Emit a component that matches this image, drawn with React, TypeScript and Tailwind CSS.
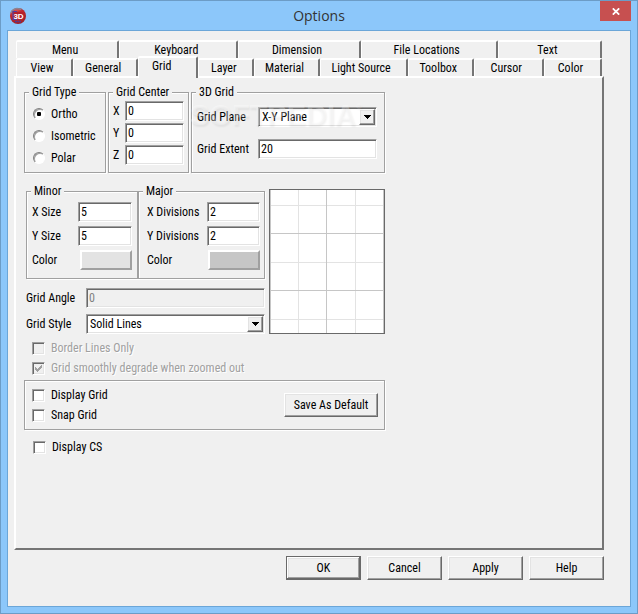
import { FC, ReactNode, useId, useState } from "react";

const SUNKEN =
  "border border-t-[#a0a0a0] border-l-[#a0a0a0] border-r-white border-b-white shadow-[inset_1px_1px_#696969,inset_-1px_-1px_#e3e3e3]";
const RAISED =
  "border border-t-white border-l-white border-r-[#696969] border-b-[#696969] shadow-[inset_-1px_-1px_#a0a0a0,inset_1px_1px_#e3e3e3]";
const SWATCH = "h-5 border-2 border-t-white border-l-white border-r-[#a0a0a0] border-b-[#a0a0a0]";

const topTabs = ["Menu", "Keyboard", "Dimension", "File Locations", "Text"];
const bottomTabs = ["View", "General", "Grid", "Layer", "Material", "Light Source", "Toolbox", "Cursor", "Color"];

interface TabProps {
  label: string;
  active: boolean;
  onSelect: (label: string) => void;
}

const Tab: FC<TabProps> = ({ label, active, onSelect }) => (
  <button
    type="button"
    role="tab"
    aria-selected={active}
    onClick={() => onSelect(label)}
    className={`rounded-t-xs border-t-2 border-l border-r-2 border-t-white border-l-white border-r-[#757575] bg-[#f0f0f0] pr-1 whitespace-nowrap ${
      active ? "z-10 -mt-0.5 -mb-0.5 pr-3 pb-1" : ""
    }`}
  >
    {label}
  </button>
);

interface GroupProps {
  title: string;
  className?: string;
  bodyClass?: string;
  children: ReactNode;
}

const Group: FC<GroupProps> = ({ title, className = "", bodyClass = "", children }) => (
  <fieldset className={`border border-[#a0a0a0] shadow-[1px_1px_#fff,inset_1px_1px_#fff] ${className}`}>
    <legend className="ml-1 bg-[#f0f0f0] px-[3px] leading-[14px] whitespace-nowrap">{title}</legend>
    <div className={bodyClass}>{children}</div>
  </fieldset>
);

interface FieldProps {
  label: string;
  value: string;
  labelClass?: string;
  disabled?: boolean;
}

const Field: FC<FieldProps> = ({ label, value, labelClass = "", disabled }) => {
  const id = useId();
  return (
    <div className="flex items-center">
      <label htmlFor={id} className={`shrink-0 ${labelClass}`}>
        {label}
      </label>
      <input
        id={id}
        type="text"
        defaultValue={value}
        disabled={disabled}
        className={`h-5 w-full min-w-0 rounded-none px-0.5 outline-none ${SUNKEN} ${
          disabled ? "bg-[#f0f0f0] text-[#808080]" : "bg-white"
        }`}
      />
    </div>
  );
};

interface SelectFieldProps {
  label: string;
  options: string[];
  labelClass?: string;
}

const SelectField: FC<SelectFieldProps> = ({ label, options, labelClass = "" }) => {
  const id = useId();
  return (
    <div className="flex items-center">
      <label htmlFor={id} className={`shrink-0 ${labelClass}`}>
        {label}
      </label>
      <div className="relative w-full">
        <select id={id} className={`block h-5 w-full appearance-none rounded-none bg-white pr-5 pl-[3px] leading-4 outline-none ${SUNKEN}`}>
          {options.map((o) => (
            <option key={o}>{o}</option>
          ))}
        </select>
        <span className={`pointer-events-none absolute top-0.5 right-0.5 bottom-0.5 flex w-4 items-center justify-center bg-[#f0f0f0] ${RAISED}`}>
          <svg width="7" height="4" viewBox="0 0 7 4" shapeRendering="crispEdges">
            <path d="M0 0h7v1H0zM1 1h5v1H1zM2 2h3v1H2zM3 3h1v1H3z" fill="#000" />
          </svg>
        </span>
      </div>
    </div>
  );
};

interface CheckProps {
  label: string;
  checked?: boolean;
  disabled?: boolean;
}

const Check: FC<CheckProps> = ({ label, checked, disabled }) => (
  <label className={`flex h-5 items-center gap-1.5 ${disabled ? "text-[#a0a0a0] [text-shadow:1px_1px_#fff]" : ""}`}>
    <span className="grid place-items-center">
      <input
        type="checkbox"
        defaultChecked={checked}
        disabled={disabled}
        className={`peer col-start-1 row-start-1 size-[13px] appearance-none ${SUNKEN} ${disabled ? "bg-[#f0f0f0]" : "bg-white"}`}
      />
      <svg
        className="pointer-events-none invisible col-start-1 row-start-1 peer-checked:visible"
        width="7"
        height="7"
        viewBox="0 0 7 7"
        shapeRendering="crispEdges"
      >
        <path
          d="M0 2h1v3H0zM1 3h1v3H1zM2 4h1v3H2zM3 3h1v3H3zM4 2h1v3H4zM5 1h1v3H5zM6 0h1v3H6z"
          fill={disabled ? "#a0a0a0" : "#000"}
        />
      </svg>
    </span>
    {label}
  </label>
);

const Radio: FC<{ label: string; checked?: boolean }> = ({ label, checked }) => (
  <label className="flex h-[22px] items-center gap-1.5">
    <input
      type="radio"
      name="gridType"
      defaultChecked={checked}
      className="size-3 appearance-none rounded-full border border-t-[#808080] border-r-white border-b-white border-l-[#808080] bg-white shadow-[inset_1px_1px_#a0a0a0] checked:bg-[radial-gradient(circle,#000_2px,#fff_2.5px)]"
    />
    {label}
  </label>
);

const Logo = () => (
  <svg width="18" height="18" viewBox="0 0 18 18" aria-hidden="true">
    <defs>
      <radialGradient id="ball" cx="40%" cy="30%" r="75%">
        <stop offset="0" stopColor="#dd6a66" />
        <stop offset="0.5" stopColor="#c3272b" />
        <stop offset="1" stopColor="#96202a" />
      </radialGradient>
    </defs>
    <circle cx="9" cy="9" r="8" fill="url(#ball)" />
    <path d="M1.800 6Q3.500 2 8 1.500L12.500 2.400" fill="none" stroke="#8d8390" strokeWidth="1.600" />
    <path d="M4 4.500h9l1.500 1.500v6H4z" fill="#b3202c" />
    <path d="M8 4.500H4v8h4" fill="none" stroke="#4f3fa0" strokeWidth="1.200" />
    <text x="9.500" y="11.500" textAnchor="middle" fontSize="8" fontWeight="700" fill="#fff" fontFamily="Liberation Sans, sans-serif">
      3D
    </text>
    <path d="M6 14.500h6" stroke="#4b3b98" strokeWidth="1.500" strokeDasharray="2 0.500" />
  </svg>
);

const GridPreview = () => (
  <svg width="116" height="145" viewBox="0 0 116 145" shapeRendering="crispEdges" className="shrink-0">
    <rect width="116" height="145" fill="#696969" />
    <rect x="1" y="1" width="114" height="143" fill="#fff" />
    <path d="M29.500 1v143M86.500 1v143M1 16.500h114M1 73.500h114M1 130.500h114" stroke="#e3e3e3" />
    <path d="M1.500 1v143M57.500 1v143M114.500 1v143M1 44.500h114M1 101.500h114" stroke="#c6c6c6" />
  </svg>
);

const DialogButton: FC<{ label: string; primary?: boolean }> = ({ label, primary }) => (
  <button
    type="button"
    className={`h-6 w-[75px] bg-[#f0f0f0] ${
      primary
        ? "border border-[#696969] shadow-[inset_-1px_-1px_#696969,inset_1px_1px_#fff,inset_-2px_-2px_#a0a0a0,inset_2px_2px_#e3e3e3]"
        : RAISED
    }`}
  >
    {label}
  </button>
);

const App = () => {
  const [tab, setTab] = useState("Grid");

  return (
    <div className="flex min-h-screen w-full flex-col border border-[#6c9cc6] bg-[#8cc7fa] px-[6px] pb-[6px] font-['Roboto_Condensed','Liberation_Sans_Narrow',sans-serif] text-[12px] leading-4 text-black">
      <header className="grid h-[29px] grid-cols-[1fr_auto_1fr] items-center">
        <div className="pl-0.5">
          <Logo />
        </div>
        <h1 className="font-['Open_Sans',sans-serif] text-[14px] text-[#333]">Options</h1>
        <button
          type="button"
          aria-label="Close"
          className="flex h-5 w-[31px] items-center justify-center self-start justify-self-end bg-[#c75050]"
        >
          <svg width="8" height="7" viewBox="0 0 8 7">
            <path d="M0.800 0.300L7.200 6.700M7.200 0.300L0.800 6.700" stroke="#fff" strokeWidth="1.700" />
          </svg>
        </button>
      </header>

      <main className="flex flex-1 flex-col border border-[#6ba6d8] bg-[#f0f0f0] pt-[9px] pr-[26px] pb-[26px] pl-[6px]">
        <div role="tablist" className="mr-0.5 ml-0.5">
          <div className="grid h-[18px] grid-cols-[103fr_119fr_122fr_137fr_104fr]">
            {topTabs.map((t) => (
              <Tab key={t} label={t} active={t === tab} onSelect={setTab} />
            ))}
          </div>
          <div className="grid h-[18px] grid-cols-[57fr_65fr_60fr_56fr_65fr_88fr_66fr_70fr_58fr]">
            {bottomTabs.map((t) => (
              <Tab key={t} label={t} active={t === tab} onSelect={setTab} />
            ))}
          </div>
        </div>

        <section className="flex-1 border-2 border-t-white border-r-[#757575] border-b-[#757575] border-l-white pt-[7px] pl-2">
          <div className="flex w-[361px] gap-0.5">
            <Group title="Grid Type" className="w-[82px]" bodyClass="pt-1 pb-[3px] pl-2">
              <Radio label="Ortho" checked />
              <Radio label="Isometric" />
              <Radio label="Polar" />
            </Group>
            <Group title="Grid Center" className="w-[81px]" bodyClass="flex flex-col gap-0.5 pt-0.5 pr-1 pl-1">
              <Field label="X" value="0" labelClass="w-3" />
              <Field label="Y" value="0" labelClass="w-3" />
              <Field label="Z" value="0" labelClass="w-3" />
            </Group>
            <Group title="3D Grid" className="relative flex-1" bodyClass="flex flex-col gap-3 pt-2 pr-[7px] pl-[5px]">
              <SelectField label="Grid Plane" options={["X-Y Plane", "Y-Z Plane", "X-Z Plane"]} labelClass="w-[61px]" />
              <Field label="Grid Extent" value="20" labelClass="w-[61px]" />
              <span
                aria-hidden="true"
                className="pointer-events-none absolute top-0 -left-0.5 font-['Liberation_Sans',sans-serif] text-[29px] leading-8 font-bold text-white/30 [text-shadow:1px_2px_2px_rgb(0_0_0/0.06)]"
              >
                SOFTPEDIA
                <sup className="-top-4 text-[8px]">®</sup>
              </span>
            </Group>
          </div>

          <div className="mt-[11px] flex w-[361px] items-end justify-between pl-0.5">
            <div className="w-[239px]">
              <div className="flex">
                <Group title="Minor" className="w-[112px]" bodyClass="flex flex-col gap-1 pt-1 pr-[5px] pb-2 pl-[5px]">
                  <Field label="X Size" value="5" labelClass="w-[46px]" />
                  <Field label="Y Size" value="5" labelClass="w-[46px]" />
                  <div className="flex items-center">
                    <span className="w-12 shrink-0">Color</span>
                    <button type="button" aria-label="Minor color" className={`w-full bg-[#e3e3e3] ${SWATCH}`} />
                  </div>
                </Group>
                <Group title="Major" className="flex-1" bodyClass="flex flex-col gap-1 pt-1 pr-1 pb-2 pl-2">
                  <Field label="X Divisions" value="2" labelClass="w-[60px]" />
                  <Field label="Y Divisions" value="2" labelClass="w-[60px]" />
                  <div className="flex items-center">
                    <span className="w-[61px] shrink-0">Color</span>
                    <button type="button" aria-label="Major color" className={`w-full bg-[#c6c6c6] ${SWATCH}`} />
                  </div>
                </Group>
              </div>
              <div className="mt-[9px] flex flex-col gap-1.5">
                <Field label="Grid Angle" value="0" labelClass="w-[60px]" disabled />
                <SelectField label="Grid Style" options={["Solid Lines", "Dotted Lines", "Dots"]} labelClass="w-[60px]" />
              </div>
            </div>
            <GridPreview />
          </div>

          <div className="mt-1 pl-2">
            <Check label="Border Lines Only" disabled />
            <Check label="Grid smoothly degrade when zoomed out" checked disabled />
          </div>

          <div className="mt-0.5 flex w-[361px] items-center justify-between border border-[#a0a0a0] py-1 pr-1.5 pl-[7px] shadow-[1px_1px_#fff,inset_1px_1px_#fff]">
            <div>
              <Check label="Display Grid" />
              <Check label="Snap Grid" />
            </div>
            <button type="button" className={`h-6 w-[94px] bg-[#f0f0f0] ${RAISED}`}>
              Save As Default
            </button>
          </div>

          <div className="mt-[7px] pl-[9px]">
            <Check label="Display CS" />
          </div>
        </section>

        <footer className="mt-1.5 flex justify-end gap-1.5">
          <DialogButton label="OK" primary />
          <DialogButton label="Cancel" />
          <DialogButton label="Apply" />
          <DialogButton label="Help" />
        </footer>
      </main>
    </div>
  );
};

export default App;
